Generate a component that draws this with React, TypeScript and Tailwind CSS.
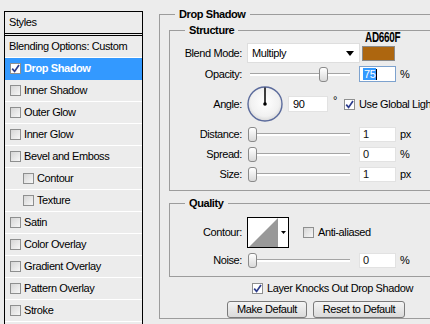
import React from 'react'

const font = "font-['Liberation_Sans',Arial,sans-serif]"

interface LayerStyle {
  label: string
  sub?: boolean
  checked?: boolean
  active?: boolean
}

const styles: LayerStyle[] = [
  { label: 'Drop Shadow', checked: true, active: true },
  { label: 'Inner Shadow' },
  { label: 'Outer Glow' },
  { label: 'Inner Glow' },
  { label: 'Bevel and Emboss' },
  { label: 'Contour', sub: true },
  { label: 'Texture', sub: true },
  { label: 'Satin' },
  { label: 'Color Overlay' },
  { label: 'Gradient Overlay' },
  { label: 'Pattern Overlay' },
  { label: 'Stroke' },
]

function Check({ checked }: { checked?: boolean }) {
  return (
    <span className={`flex h-[11px] w-[11px] shrink-0 items-center justify-center border border-[#8e8f8f] ${checked ? 'bg-white' : 'bg-linear-to-br from-[#d6d6d6] to-[#f7f7f7]'}`}>
      {checked && (
        <svg width="9" height="9" viewBox="0 0 9 9">
          <path d="M1.2 4.6 L3.6 7.4 L8 1" fill="none" stroke="#2c3c8c" strokeWidth="1.7" />
        </svg>
      )}
    </span>
  )
}

function Slider({ value }: { value: number }) {
  return (
    <div className="relative ml-[6px] h-[15px] w-[104px] shrink-0">
      <div className="absolute left-[2px] right-[2px] top-[6px] h-[3px] border-t border-[#a5a5a5] bg-white" />
      <div
        className="absolute top-0 h-[15px] w-[9px] rounded-[3px] border border-[#8a8a8a] bg-linear-to-b from-white to-[#d9d9d9]"
        style={{ left: `${value * 95}px` }}
      />
    </div>
  )
}

function Field({ value, unit, focus }: { value: string; unit: string; focus?: boolean }) {
  return (
    <>
      <div className={`ml-[7px] flex h-[15px] w-[37px] shrink-0 items-center bg-white pl-[3px] text-[11px] text-[#111] ${focus ? 'h-[16px] border border-[#7da2ce]' : 'border border-[#e2e2e2]'}`}>
        {focus ? (
          <>
            <span className="bg-[#3399ff] px-[1px] leading-[12px] text-white">{value}</span>
            <span className="h-[11px] w-px bg-black" />
          </>
        ) : (
          <span>{value}</span>
        )}
      </div>
      <span className="ml-[4px] text-[11px]">{unit}</span>
    </>
  )
}

function Label({ children }: { children: React.ReactNode }) {
  return <span className="w-[72px] shrink-0 text-right text-[11px] leading-[13px]">{children}</span>
}

function SliderRow({ label, value, text, unit }: { label: string; value: number; text: string; unit: string }) {
  return (
    <div className="flex h-[15px] items-center">
      <Label>{label}</Label>
      <Slider value={value} />
      <Field value={text} unit={unit} />
    </div>
  )
}

export default function App() {
  return (
    <div className={`flex h-[324px] w-[430px] items-start overflow-hidden bg-[#ececec] tracking-[-0.4px] text-black ${font}`}>
      {/* Styles list */}
      <div className="ml-[4px] mt-[11px] h-[340px] w-[139px] shrink-0 border border-black bg-[#ececec]">
        <div className="flex h-[24px] items-center border-b-[3px] border-double border-black pl-[4px] text-[11px]">Styles</div>
        <div className="flex h-[22px] items-center border-b border-white pl-[4px] text-[11px]">Blending Options: Custom</div>
        {styles.map((s) => (
          <div
            key={s.label}
            className={`flex h-[22px] items-center gap-[3px] border-b text-[11px] ${s.sub ? 'pl-[18px]' : 'pl-[5px]'} ${s.active ? 'border-[#3399ff] bg-[#3399ff] font-bold text-white' : 'border-white'}`}
          >
            <Check checked={s.checked} />
            <span>{s.label}</span>
          </div>
        ))}
      </div>

      {/* Drop Shadow panel */}
      <fieldset className="ml-[16px] mt-[7px] w-[300px] shrink-0 border border-[#9c9c9c] pl-[9px]">
        <legend className="ml-[6px] px-[4px] text-[11px] font-bold leading-[14px]">Drop Shadow</legend>

        <fieldset className="mt-[2px] border border-[#9c9c9c] pb-[8px] pt-[6px]">
          <legend className="ml-[15px] px-[4px] text-[11px] font-bold leading-[14px]">Structure</legend>

          <div className="flex h-[20px] items-center">
            <Label>Blend Mode:</Label>
            <div className="ml-[5px] flex h-[20px] w-[113px] items-center justify-between border border-[#dedede] bg-white pl-[4px] pr-[5px] text-[11px]">
              <span>Multiply</span>
              <svg width="8" height="5" viewBox="0 0 8 5">
                <path d="M0 0 H8 L4 5 Z" fill="#000" />
              </svg>
            </div>
            <div className="relative ml-[2px] h-[15px] w-[33px] border border-[#8a8a8a] bg-[#ad660f]">
              <span className="absolute bottom-[17px] left-[2px] origin-left scale-x-[0.66] text-[15px] font-bold leading-[13px] tracking-tight">AD660F</span>
            </div>
          </div>

          <div className="mt-[3px] flex h-[16px] items-center">
            <Label>Opacity:</Label>
            <Slider value={0.75} />
            <Field value="75" unit="%" focus />
          </div>

          <div className="mt-[4px] flex h-[36px] items-center">
            <Label>Angle:</Label>
            <svg className="ml-[5px] shrink-0" width="36" height="36" viewBox="0 0 36 36">
              <defs>
                <radialGradient id="dial" cx="50%" cy="45%" r="55%">
                  <stop offset="0%" stopColor="#ffffff" />
                  <stop offset="75%" stopColor="#f1f1f1" />
                  <stop offset="100%" stopColor="#d8d8d8" />
                </radialGradient>
              </defs>
              <circle cx="18" cy="18" r="17" fill="url(#dial)" stroke="#5b6b9c" strokeWidth="1.4" />
              <line x1="18" y1="18" x2="18" y2="1.5" stroke="#000" strokeWidth="1.5" />
              <circle cx="18" cy="18" r="1.8" fill="#000" />
            </svg>
            <div className="ml-[5px] flex h-[16px] w-[40px] shrink-0 items-center border border-[#e2e2e2] bg-white pl-[4px] text-[11px]">90</div>
            <span className="ml-[5px] mb-[8px] text-[11px]">°</span>
            <span className="ml-[7px]"><Check checked /></span>
            <span className="ml-[4px] whitespace-nowrap text-[11px]">Use Global Light</span>
          </div>

          <div className="mt-[5px] flex flex-col gap-[5px]">
            <SliderRow label="Distance:" value={0} text="1" unit="px" />
            <SliderRow label="Spread:" value={0} text="0" unit="%" />
            <SliderRow label="Size:" value={0} text="1" unit="px" />
          </div>
        </fieldset>

        <fieldset className="mt-[5px] border border-[#9c9c9c] pb-[8px] pt-[7px]">
          <legend className="ml-[15px] px-[4px] text-[11px] font-bold leading-[14px]">Quality</legend>

          <div className="flex h-[31px] items-center">
            <Label>Contour:</Label>
            <div className="ml-[5px] flex h-[31px] w-[42px] shrink-0 border border-black bg-white">
              <svg width="30" height="29" viewBox="0 0 30 29">
                <path d="M1 29 L30 0 L30 29 Z" fill="#999" />
              </svg>
              <div className="flex flex-1 items-center justify-center">
                <svg width="5" height="3" viewBox="0 0 5 3">
                  <path d="M0 0 H5 L2.5 3 Z" fill="#000" />
                </svg>
              </div>
            </div>
            <span className="ml-[14px]"><Check /></span>
            <span className="ml-[4px] text-[11px]">Anti-aliased</span>
          </div>

          <div className="mt-[5px]">
            <SliderRow label="Noise:" value={0} text="0" unit="%" />
          </div>
        </fieldset>

        <div className="mt-[5px] flex h-[12px] items-center pl-[83px]">
          <Check checked />
          <span className="ml-[4px] text-[11px]">Layer Knocks Out Drop Shadow</span>
        </div>

        <div className="mt-[7px] flex gap-[6px] pl-[58px]">
          <button className="h-[17px] w-[80px] rounded-[3px] border border-[#7a7a7a] bg-linear-to-b from-[#f4f4f4] to-[#dadada] text-[11px] leading-[15px]">Make Default</button>
          <button className="h-[17px] w-[92px] rounded-[3px] border border-[#7a7a7a] bg-linear-to-b from-[#f4f4f4] to-[#dadada] text-[11px] leading-[15px]">Reset to Default</button>
        </div>
      </fieldset>
    </div>
  )
}
